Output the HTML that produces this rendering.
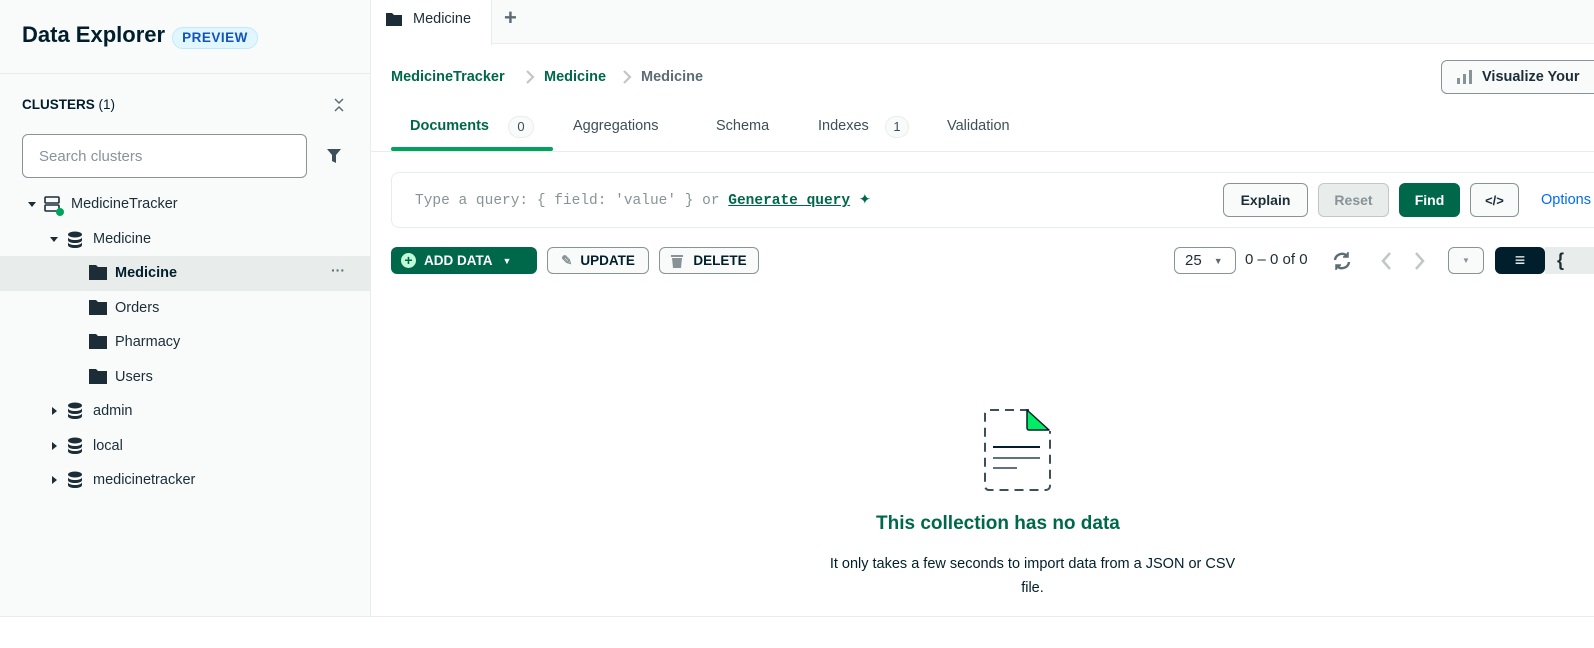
<!DOCTYPE html>
<html><head><meta charset="utf-8"><style>
*{box-sizing:border-box;margin:0;padding:0}
body{width:1594px;height:648px;overflow:hidden;background:#fff;font-family:"Liberation Sans",sans-serif;color:#1c2d38;position:relative}
.a{position:absolute}
.side{left:0;top:0;width:371px;height:616px;background:#f9fbfa;border-right:1px solid #e8edeb}
.foot{left:0;top:616px;width:1594px;height:1px;background:#e8edeb}
.ti{font-size:14.5px;white-space:nowrap}
.btn{border:1px solid #889397;border-radius:6px;background:#f9fbfa;font-weight:bold;font-size:14px;display:flex;align-items:center;justify-content:center}
</style></head><body>
<div class="a side"></div>
<div class="a" style="left:0;top:73px;width:371px;height:1px;background:#e8edeb"></div>
<div class="a" style="left:22px;top:22px;font-size:22px;font-weight:bold;color:#001e2b">Data Explorer</div>
<div class="a" style="left:172px;top:27px;width:86px;height:22px;border:1px solid #c3e7fe;background:#e1f7ff;border-radius:11px;color:#1254b7;font-weight:bold;font-size:13.5px;letter-spacing:.5px;text-align:center;line-height:20px">PREVIEW</div>
<div class="a" style="left:22px;top:97px;font-size:13.5px;font-weight:bold;color:#001e2b">CLUSTERS <span style="font-weight:normal">(1)</span></div>
<svg class="a" style="left:332px;top:98px" width="14" height="14" viewBox="0 0 14 14" fill="none" stroke="#5c6c75" stroke-width="1.5"><path d="M3 1l4 4 4-4M3 13l4-4 4 4"/></svg>
<div class="a" style="left:22px;top:134px;width:285px;height:44px;border:1px solid #889397;border-radius:6px;background:#fff;color:#889397;font-size:15px;padding:13px 16px">Search clusters</div>
<svg class="a" style="left:326px;top:148px" width="16" height="16" viewBox="0 0 16 16"><path d="M1 1h14l-5 6v8l-4-2V7z" fill="#3d4f58"/></svg>
<svg class="a" style="left:27px;top:201px" width="10" height="8"><path d="M1 1h8L5 6z" fill="#1c2d38"/></svg>
<svg class="a" style="left:43px;top:195px" width="22" height="22" viewBox="0 0 22 22" fill="none" stroke="#1c2d38" stroke-width="1.6"><rect x="2" y="2" width="14" height="6" rx="1"/><rect x="2" y="10" width="14" height="6" rx="1"/><circle cx="17" cy="17" r="4" fill="#00a35c" stroke="none"/></svg>
<div class="a ti" style="left:71px;top:196px">MedicineTracker</div>
<svg class="a" style="left:49px;top:236px" width="10" height="8"><path d="M1 1h8L5 6z" fill="#1c2d38"/></svg>
<svg class="a" style="left:67px;top:231px" width="16" height="18" viewBox="0 0 16 18"><ellipse cx="8" cy="3.5" rx="7" ry="3" fill="#1c2d38"/><path d="M1 6c0 4 14 4 14 0v3c0 4-14 4-14 0zM1 11c0 4 14 4 14 0v3c0 4-14 4-14 0z" fill="#1c2d38"/></svg>
<div class="a ti" style="left:93px;top:231px">Medicine</div>
<div class="a" style="left:0;top:256px;width:371px;height:35px;background:#e8edeb"></div>
<svg class="a" style="left:89px;top:264px" width="18" height="16"><path d="M0 1h7l2 2h9v13H0z" fill="#1c2d38"/></svg>
<div class="a ti" style="left:115px;top:265px;font-weight:bold;color:#001e2b">Medicine</div>
<div class="a" style="left:331px;top:262px;font-size:14px;font-weight:bold;color:#5c6c75">···</div>
<svg class="a" style="left:89px;top:299px" width="18" height="16"><path d="M0 1h7l2 2h9v13H0z" fill="#1c2d38"/></svg>
<div class="a ti" style="left:115px;top:300px">Orders</div>
<svg class="a" style="left:89px;top:333px" width="18" height="16"><path d="M0 1h7l2 2h9v13H0z" fill="#1c2d38"/></svg>
<div class="a ti" style="left:115px;top:334px">Pharmacy</div>
<svg class="a" style="left:89px;top:368px" width="18" height="16"><path d="M0 1h7l2 2h9v13H0z" fill="#1c2d38"/></svg>
<div class="a ti" style="left:115px;top:369px">Users</div>
<svg class="a" style="left:51px;top:406px" width="8" height="10"><path d="M1 1v8l5-4z" fill="#1c2d38"/></svg>
<svg class="a" style="left:67px;top:402px" width="16" height="18" viewBox="0 0 16 18"><ellipse cx="8" cy="3.5" rx="7" ry="3" fill="#1c2d38"/><path d="M1 6c0 4 14 4 14 0v3c0 4-14 4-14 0zM1 11c0 4 14 4 14 0v3c0 4-14 4-14 0z" fill="#1c2d38"/></svg>
<div class="a ti" style="left:93px;top:403px">admin</div>
<svg class="a" style="left:51px;top:441px" width="8" height="10"><path d="M1 1v8l5-4z" fill="#1c2d38"/></svg>
<svg class="a" style="left:67px;top:437px" width="16" height="18" viewBox="0 0 16 18"><ellipse cx="8" cy="3.5" rx="7" ry="3" fill="#1c2d38"/><path d="M1 6c0 4 14 4 14 0v3c0 4-14 4-14 0zM1 11c0 4 14 4 14 0v3c0 4-14 4-14 0z" fill="#1c2d38"/></svg>
<div class="a ti" style="left:93px;top:438px">local</div>
<svg class="a" style="left:51px;top:475px" width="8" height="10"><path d="M1 1v8l5-4z" fill="#1c2d38"/></svg>
<svg class="a" style="left:67px;top:471px" width="16" height="18" viewBox="0 0 16 18"><ellipse cx="8" cy="3.5" rx="7" ry="3" fill="#1c2d38"/><path d="M1 6c0 4 14 4 14 0v3c0 4-14 4-14 0zM1 11c0 4 14 4 14 0v3c0 4-14 4-14 0z" fill="#1c2d38"/></svg>
<div class="a ti" style="left:93px;top:472px">medicinetracker</div>
<div class="a foot"></div>
<div class="a" style="left:371px;top:0;width:1223px;height:44px;background:#f9fbfa;border-bottom:1px solid #e8edeb"></div>
<div class="a" style="left:371px;top:0;width:121px;height:45px;background:#fff;border-right:1px solid #e8edeb"></div>
<svg class="a" style="left:386px;top:12px" width="16" height="14"><path d="M0 1h6l2 2h8v11H0z" fill="#1c2d38"/></svg>
<div class="a ti" style="left:413px;top:11px">Medicine</div>
<div class="a" style="left:504px;top:5px;font-size:22px;font-weight:bold;color:#5c6c75">+</div>
<div class="a" style="left:391px;top:69px;font-size:14.5px;font-weight:bold;color:#00684a;white-space:nowrap">MedicineTracker</div>
<svg class="a" style="left:525px;top:70px" width="10" height="14" fill="none" stroke="#c1c7c6" stroke-width="2.2"><path d="M2 1l6 6-6 6"/></svg>
<div class="a" style="left:544px;top:69px;font-size:14.5px;font-weight:bold;color:#00684a">Medicine</div>
<svg class="a" style="left:622px;top:70px" width="10" height="14" fill="none" stroke="#c1c7c6" stroke-width="2.2"><path d="M2 1l6 6-6 6"/></svg>
<div class="a" style="left:641px;top:69px;font-size:14.5px;font-weight:bold;color:#5c6c75">Medicine</div>
<div class="a btn" style="left:1441px;top:60px;width:170px;height:34px;justify-content:flex-start;padding-left:14px;font-size:14.5px"><svg width="18" height="14" style="margin-right:8px"><rect x="1" y="8" width="3" height="6" fill="#889397"/><rect x="7" y="4" width="3" height="10" fill="#889397"/><rect x="13" y="0" width="3" height="14" fill="#889397"/></svg>Visualize Your</div>
<div class="a" style="left:371px;top:151px;width:1223px;height:1px;background:#e8edeb"></div>
<div class="a" style="left:391px;top:147px;width:162px;height:4px;background:#00a35c;border-radius:2px"></div>
<div class="a" style="left:410px;top:118px;font-size:14.5px;font-weight:bold;color:#00684a">Documents</div>
<div class="a" style="left:508px;top:116px;width:26px;height:22px;border:1px solid #e8edeb;background:#f9fbfa;border-radius:11px;font-size:13px;text-align:center;line-height:20px;color:#3d4f58">0</div>
<div class="a ti" style="left:573px;top:118px;color:#3d4f58">Aggregations</div>
<div class="a ti" style="left:716px;top:118px;color:#3d4f58">Schema</div>
<div class="a ti" style="left:818px;top:118px;color:#3d4f58">Indexes</div>
<div class="a" style="left:885px;top:116px;width:24px;height:22px;border:1px solid #e8edeb;background:#f9fbfa;border-radius:11px;font-size:13px;text-align:center;line-height:20px;color:#3d4f58">1</div>
<div class="a ti" style="left:947px;top:118px;color:#3d4f58">Validation</div>
<div class="a" style="left:391px;top:172px;width:1220px;height:56px;border:1px solid #e8edeb;border-radius:8px"></div>
<div class="a" style="left:415px;top:192px;font-family:'Liberation Mono',monospace;font-size:14.5px;color:#889397;white-space:pre">Type a query: { field: 'value' } or <span style="color:#00684a;font-weight:bold;text-decoration:underline">Generate query</span> <span style="color:#00684a">✦</span></div>
<div class="a btn" style="left:1223px;top:183px;width:85px;height:34px">Explain</div>
<div class="a btn" style="left:1318px;top:183px;width:71px;height:34px;background:#e8edeb;border-color:#c1c7c6;color:#889397">Reset</div>
<div class="a btn" style="left:1399px;top:183px;width:61px;height:34px;background:#00684a;border-color:#00684a;color:#fff">Find</div>
<div class="a btn" style="left:1470px;top:183px;width:49px;height:34px;font-size:13px">&lt;/&gt;</div>
<div class="a" style="left:1541px;top:192px;font-size:14.5px;color:#016bf8">Options</div>
<div class="a" style="left:391px;top:247px;width:146px;height:27px;background:#00684a;border-radius:6px;color:#fff;font-weight:bold;font-size:13.5px;display:flex;align-items:center;padding-left:10px"><span style="display:inline-block;width:15px;height:15px;border-radius:50%;background:#c0fad6;color:#00684a;font-size:14px;line-height:15px;text-align:center;margin-right:8px">+</span>ADD DATA <span style="font-size:9px;margin-left:10px">▼</span></div>
<div class="a btn" style="left:547px;top:247px;width:102px;height:27px;font-size:13.5px;color:#001e2b"><span style="color:#889397;margin-right:8px">✎</span>UPDATE</div>
<div class="a btn" style="left:659px;top:247px;width:100px;height:27px;font-size:13.5px;color:#001e2b"><svg width="12" height="14" style="margin-right:10px"><path d="M0 1h12v2H0zM1 4h10l-1 10H2z" fill="#889397"/></svg>DELETE</div>
<div class="a btn" style="left:1174px;top:247px;width:62px;height:27px;background:#fff;font-weight:normal;font-size:15px;justify-content:flex-start;padding-left:10px">25 <span style="font-size:9px;margin-left:12px;color:#5c6c75">▼</span></div>
<div class="a" style="left:1245px;top:251px;font-size:15px;color:#1c2d38">0 – 0 of 0</div>
<svg class="a" style="left:1332px;top:251px" width="20" height="20" viewBox="0 0 20 20" fill="none" stroke="#5c6c75" stroke-width="2.4"><path d="M3 9a7 7 0 0 1 12-4M17 11a7 7 0 0 1-12 4"/><path d="M16 1v5h-5M4 19v-5h5" fill="#5c6c75" stroke-width="1.5"/></svg>
<svg class="a" style="left:1380px;top:252px" width="12" height="18" fill="none" stroke="#c1c7c6" stroke-width="2.5"><path d="M10 1L3 9l7 8"/></svg>
<svg class="a" style="left:1414px;top:252px" width="12" height="18" fill="none" stroke="#c1c7c6" stroke-width="2.5"><path d="M2 1l7 8-7 8"/></svg>
<div class="a btn" style="left:1448px;top:247px;width:36px;height:27px;font-size:8px;color:#889397">▼</div>
<div class="a" style="left:1495px;top:247px;width:50px;height:27px;background:#001e2b;border-radius:6px;color:#fff;text-align:center;font-size:18px;line-height:26px">≡</div>
<div class="a" style="left:1545px;top:247px;width:49px;height:27px;background:#e8edeb;font-weight:bold;font-size:18px;padding-left:12px;line-height:26px">{</div>
<svg class="a" style="left:980px;top:405px" width="75" height="90" viewBox="0 0 75 90"><path d="M49 5H9a4 4 0 0 0-4 4v72a4 4 0 0 0 4 4h57a4 4 0 0 0 4-4V26" fill="none" stroke="#3d4f58" stroke-width="2" stroke-dasharray="9 6"/><path d="M47 5v18a2 2 0 0 0 2 2h20z" fill="#00ed64" stroke="#001e2b" stroke-width="1.5" stroke-linejoin="round"/><path d="M13 42h47" stroke="#001e2b" stroke-width="2"/><path d="M13 53h47M13 63h24" stroke="#001e2b" stroke-width="1.3"/></svg>
<div class="a" style="left:876px;top:513px;font-size:19px;font-weight:bold;color:#00684a">This collection has no data</div>
<div class="a" style="left:760px;top:552px;width:545px;text-align:center;font-size:14.5px;line-height:24px;color:#001e2b">It only takes a few seconds to import data from a JSON or CSV<br>file.</div>
</body></html>
